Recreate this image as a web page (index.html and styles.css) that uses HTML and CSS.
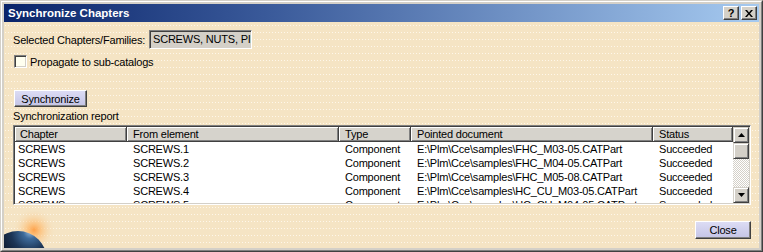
FILE: index.html
```html
<!DOCTYPE html>
<html>
<head>
<meta charset="utf-8">
<title>Synchronize Chapters</title>
<link rel="stylesheet" href="styles.css">
</head>
<body>
<div class="window">
  <div class="frame">
    <div class="titlebar">
      <span class="title">Synchronize Chapters</span>
      <div class="caption-btns">
        <span class="cap cap-help">?</span>
        <span class="cap cap-close"><svg width="8" height="7" viewBox="0 0 8 7"><path d="M0 0h2l2 2.5L6 0h2L5 3.5 8 7H6L4 4.5 2 7H0l3-3.5z" fill="#000"/></svg></span>
      </div>
    </div>
    <div class="content">
      <svg class="globe" width="60" height="40" viewBox="0 0 60 40">
        <defs>
          <radialGradient id="glow" cx="30" cy="22" r="22" gradientUnits="userSpaceOnUse">
            <stop offset="0" stop-color="#ff9a3c" stop-opacity="0.9"/>
            <stop offset="0.35" stop-color="#ffb868" stop-opacity="0.6"/>
            <stop offset="1" stop-color="#f5e4c4" stop-opacity="0"/>
          </radialGradient>
          <radialGradient id="earth" cx="26" cy="24" r="34" gradientUnits="userSpaceOnUse">
            <stop offset="0" stop-color="#8fb4d8"/>
            <stop offset="0.2" stop-color="#3d6a9a"/>
            <stop offset="0.55" stop-color="#1c3556"/>
            <stop offset="1" stop-color="#0c1628"/>
          </radialGradient>
        </defs>
        <rect x="0" y="0" width="60" height="40" fill="url(#glow)"/>
        <circle cx="14" cy="52" r="29" fill="url(#earth)"/>
      </svg>
      <div class="sel-row">
        <span class="sel-label">Selected Chapters/Families:</span>
        <div class="field">SCREWS, NUTS, PINS</div>
      </div>
      <div class="check-row">
        <span class="checkbox"></span>
        <span>Propagate to sub-catalogs</span>
      </div>
      <div class="btn btn-sync">Synchronize</div>
      <div class="report-label">Synchronization report</div>
      <div class="table">
        <div class="grid">
          <div class="tr thead">
            <div class="th">Chapter</div>
            <div class="th">From element</div>
            <div class="th">Type</div>
            <div class="th">Pointed document</div>
            <div class="th">Status</div>
          </div>
          <div class="tbody">
            <div class="tr"><div class="td first">SCREWS</div><div class="td">SCREWS.1</div><div class="td">Component</div><div class="td">E:\Plm\Cce\samples\FHC_M03-05.CATPart</div><div class="td">Succeeded</div></div>
            <div class="tr"><div class="td first">SCREWS</div><div class="td">SCREWS.2</div><div class="td">Component</div><div class="td">E:\Plm\Cce\samples\FHC_M04-05.CATPart</div><div class="td">Succeeded</div></div>
            <div class="tr"><div class="td first">SCREWS</div><div class="td">SCREWS.3</div><div class="td">Component</div><div class="td">E:\Plm\Cce\samples\FHC_M05-08.CATPart</div><div class="td">Succeeded</div></div>
            <div class="tr"><div class="td first">SCREWS</div><div class="td">SCREWS.4</div><div class="td">Component</div><div class="td">E:\Plm\Cce\samples\HC_CU_M03-05.CATPart</div><div class="td">Succeeded</div></div>
            <div class="tr"><div class="td first">SCREWS</div><div class="td">SCREWS.5</div><div class="td">Component</div><div class="td">E:\Plm\Cce\samples\HC_CU_M04-05.CATPart</div><div class="td">Succeeded</div></div>
          </div>
        </div>
        <div class="scrollbar">
          <div class="sb-btn"><svg width="7" height="4" viewBox="0 0 7 4"><path d="M3.5 0L7 4H0z" fill="#000"/></svg></div>
          <div class="sb-thumb"></div>
          <div class="sb-track"></div>
          <div class="sb-btn"><svg width="7" height="4" viewBox="0 0 7 4"><path d="M0 0h7L3.5 4z" fill="#000"/></svg></div>
        </div>
      </div>
      <div class="footer">
        <div class="btn btn-close">Close</div>
      </div>
    </div>
  </div>
</div>
</body>
</html>
```
FILE: styles.css
```css
body {
  margin: 0;
  background: #d4d0c8;
  font-family: "Liberation Sans", Arial, sans-serif;
  font-size: 11px;
  letter-spacing: -0.2px;
  color: #000;
}

.window {
  width: 763px;
  height: 252px;
  box-sizing: border-box;
  border: 1px solid;
  border-color: #d4d0c8 #404040 #404040 #d4d0c8;
}

.frame {
  height: 100%;
  box-sizing: border-box;
  border: 1px solid;
  border-color: #ffffff #808080 #808080 #ffffff;
  padding: 2px;
  background: #d4d0c8;
  display: flex;
  flex-direction: column;
}

.titlebar {
  height: 18px;
  flex: none;
  background: linear-gradient(to right, #0a246a 0%, #3a5a9a 35%, #a6caf0 100%);
  display: flex;
  align-items: center;
  justify-content: space-between;
  padding: 0 2px;
}

.title {
  color: #fff;
  font-weight: bold;
  font-size: 11.5px;
  letter-spacing: 0;
  padding-left: 2px;
}

.caption-btns {
  display: flex;
  gap: 2px;
}

.cap {
  width: 16px;
  height: 14px;
  box-sizing: border-box;
  background: #d4d0c8;
  border: 1px solid;
  border-color: #ffffff #404040 #404040 #ffffff;
  box-shadow: inset -1px -1px #808080;
  display: flex;
  align-items: center;
  justify-content: center;
  font-weight: bold;
  font-size: 11px;
  line-height: 1;
}

.content {
  flex: 1;
  position: relative;
  overflow: hidden;
  padding: 0 8px 0 9px;
  background-color: #f5e4c4;
  background-image: radial-gradient(circle, rgba(255, 250, 238, 0.9) 0.5px, transparent 0.9px);
  background-size: 3px 7px;
}

.globe {
  position: absolute;
  left: 0;
  bottom: 0;
}

.sel-row {
  position: relative;
  display: flex;
  align-items: center;
  margin-top: 8px;
  height: 19px;
}

.sel-label {
  flex: none;
  width: 136px;
  white-space: nowrap;
}

.field {
  flex: none;
  width: 103px;
  height: 19px;
  box-sizing: border-box;
  border: 1px solid;
  border-color: #808080 #ffffff #ffffff #808080;
  box-shadow: inset 1px 1px #404040, inset -1px -1px #d4d0c8;
  background: #d4d0c8;
  padding: 0 0 0 3px;
  line-height: 17px;
  white-space: nowrap;
  overflow: hidden;
}

.check-row {
  position: relative;
  display: flex;
  align-items: center;
  gap: 3px;
  margin-top: 6px;
  margin-left: 1px;
  height: 13px;
}

.checkbox {
  width: 13px;
  height: 13px;
  box-sizing: border-box;
  border: 1px solid;
  border-color: #808080 #ffffff #ffffff #808080;
  box-shadow: inset 1px 1px #404040, inset -1px -1px #d4d0c8;
  background: #fffff0;
}

.btn {
  position: relative;
  box-sizing: border-box;
  border: 1px solid;
  border-color: #ffffff #404040 #404040 #ffffff;
  box-shadow: inset -1px -1px #808080;
  background: linear-gradient(#dcdcf4, #c4c4e6);
  display: flex;
  align-items: center;
  justify-content: center;
}

.btn-sync {
  width: 73px;
  height: 17px;
  margin-top: 22px;
  margin-left: 1px;
}

.report-label {
  position: relative;
  margin-top: 3px;
  line-height: 13px;
}

.table {
  position: relative;
  margin-top: 2px;
  width: 738px;
  height: 80px;
  box-sizing: border-box;
  border: 1px solid;
  border-color: #808080 #ffffff #ffffff #808080;
  box-shadow: inset 1px 1px #404040, inset -1px -1px #d4d0c8;
  padding: 1px;
  display: flex;
  background: #fff;
}

.grid {
  flex: 1;
  overflow: hidden;
}

.tr {
  display: grid;
  grid-template-columns: 112px 212px 72px 242px 1fr;
  height: 14px;
  line-height: 14px;
  white-space: nowrap;
}

.thead {
  height: 15px;
  line-height: 14px;
}

.th {
  box-sizing: border-box;
  background: #d6d3cc;
  border-right: 1px solid #404040;
  border-bottom: 1px solid #404040;
  box-shadow: inset 1px 1px #ffffff, inset -1px -1px #808080;
  padding-left: 6px;
  overflow: hidden;
}

.th:first-child {
  padding-left: 5px;
}

.tbody {
  height: 61px;
  overflow: hidden;
}

.td {
  padding-left: 6px;
  overflow: hidden;
}

.td.first {
  padding-left: 3px;
}

.scrollbar {
  width: 16px;
  display: flex;
  flex-direction: column;
}

.sb-btn,
.sb-thumb {
  height: 16px;
  box-sizing: border-box;
  background: #d4d0c8;
  border: 1px solid;
  border-color: #d4d0c8 #404040 #404040 #d4d0c8;
  box-shadow: inset 1px 1px #ffffff, inset -1px -1px #808080;
  display: flex;
  align-items: center;
  justify-content: center;
}

.sb-track {
  flex: 1;
  background-image: repeating-conic-gradient(#ffffff 0 25%, #d4d0c8 0 50%);
  background-size: 2px 2px;
}

.footer {
  position: relative;
  display: flex;
  justify-content: flex-end;
  margin-top: 16px;
}

.btn-close {
  width: 56px;
  height: 18px;
}
```
